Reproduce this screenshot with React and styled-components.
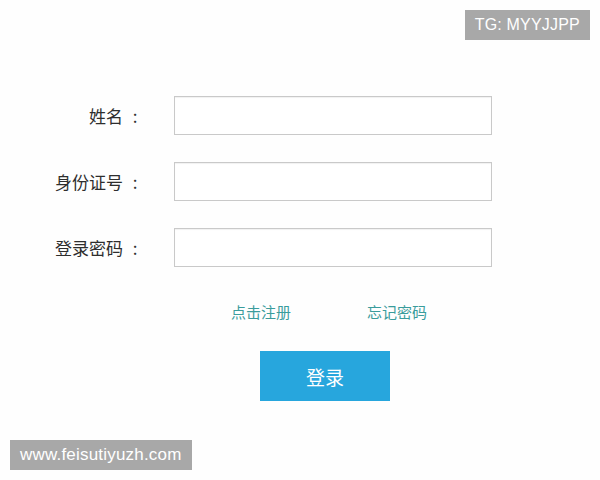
import React from "react";
import styled, { createGlobalStyle } from "styled-components";

const GlobalStyle = createGlobalStyle`
  body {
    margin: 0;
    background: #ffffff;
    font-family: "Liberation Sans", "Noto Sans CJK SC", sans-serif;
  }
`;

const Page = styled.div`
  position: relative;
  width: 600px;
  height: 480px;
  overflow: hidden;
  padding-top: 96px;
  box-sizing: border-box;
  background: #fefefe;
`;

const Form = styled.div`
  display: grid;
  grid-template-columns: 147px 318px;
  column-gap: 27px;
  row-gap: 27px;
  align-items: center;
`;

const Label = styled.label`
  display: flex;
  justify-content: flex-end;
  font-size: 17px;
  color: #2e2e2e;
  font-family: "Noto Sans CJK SC", sans-serif;
`;

const Colon = styled.span`
  width: 24px;
  text-align: center;
`;

const Input = styled.input`
  box-sizing: border-box;
  width: 318px;
  height: 39px;
  border: 1px solid #c9c9c9;
  box-shadow: inset 0 1px 1px rgba(0, 0, 0, 0.06);
  background: #ffffff;
  outline: none;
`;

const Links = styled.div`
  display: flex;
  gap: 76px;
  margin-top: 35px;
  padding-left: 231px;
`;

const Link = styled.a`
  font-size: 15px;
  line-height: 20px;
  color: #3a9c9c;
  font-family: "Noto Sans CJK SC", sans-serif;
  text-decoration: none;
  cursor: pointer;
`;

const Submit = styled.button`
  display: block;
  margin: 29px 0 0 260px;
  width: 130px;
  height: 50px;
  border: none;
  background: #27a6dd;
  color: #ffffff;
  font-size: 19px;
  font-family: "Noto Sans CJK SC", sans-serif;
  cursor: pointer;
`;

const Badge = styled.div`
  position: absolute;
  ${(p) => p.pos};
  height: 30px;
  padding: 0 10px;
  background: #a8a8a8;
  color: #ffffff;
  font-size: ${(p) => p.size}px;
  letter-spacing: ${(p) => p.track}px;
  line-height: 30px;
  font-family: "Liberation Sans", sans-serif;
`;

const fields = ["姓名", "身份证号", "登录密码"];

export default function App() {
  return (
    <>
      <GlobalStyle />
      <Page>
        <Form>
          {fields.map((f, i) => (
            <React.Fragment key={i}>
              <Label>
                {f}
                <Colon>:</Colon>
              </Label>
              <Input type={i === 2 ? "password" : "text"} />
            </React.Fragment>
          ))}
        </Form>
        <Links>
          <Link>点击注册</Link>
          <Link>忘记密码</Link>
        </Links>
        <Submit>登录</Submit>
        <Badge pos="top: 10px; right: 10px;" size={16} track={0.2}>
          TG: MYYJJPP
        </Badge>
        <Badge pos="bottom: 10px; left: 10px;" size={17} track={0.2}>
          www.feisutiyuzh.com
        </Badge>
      </Page>
    </>
  );
}
